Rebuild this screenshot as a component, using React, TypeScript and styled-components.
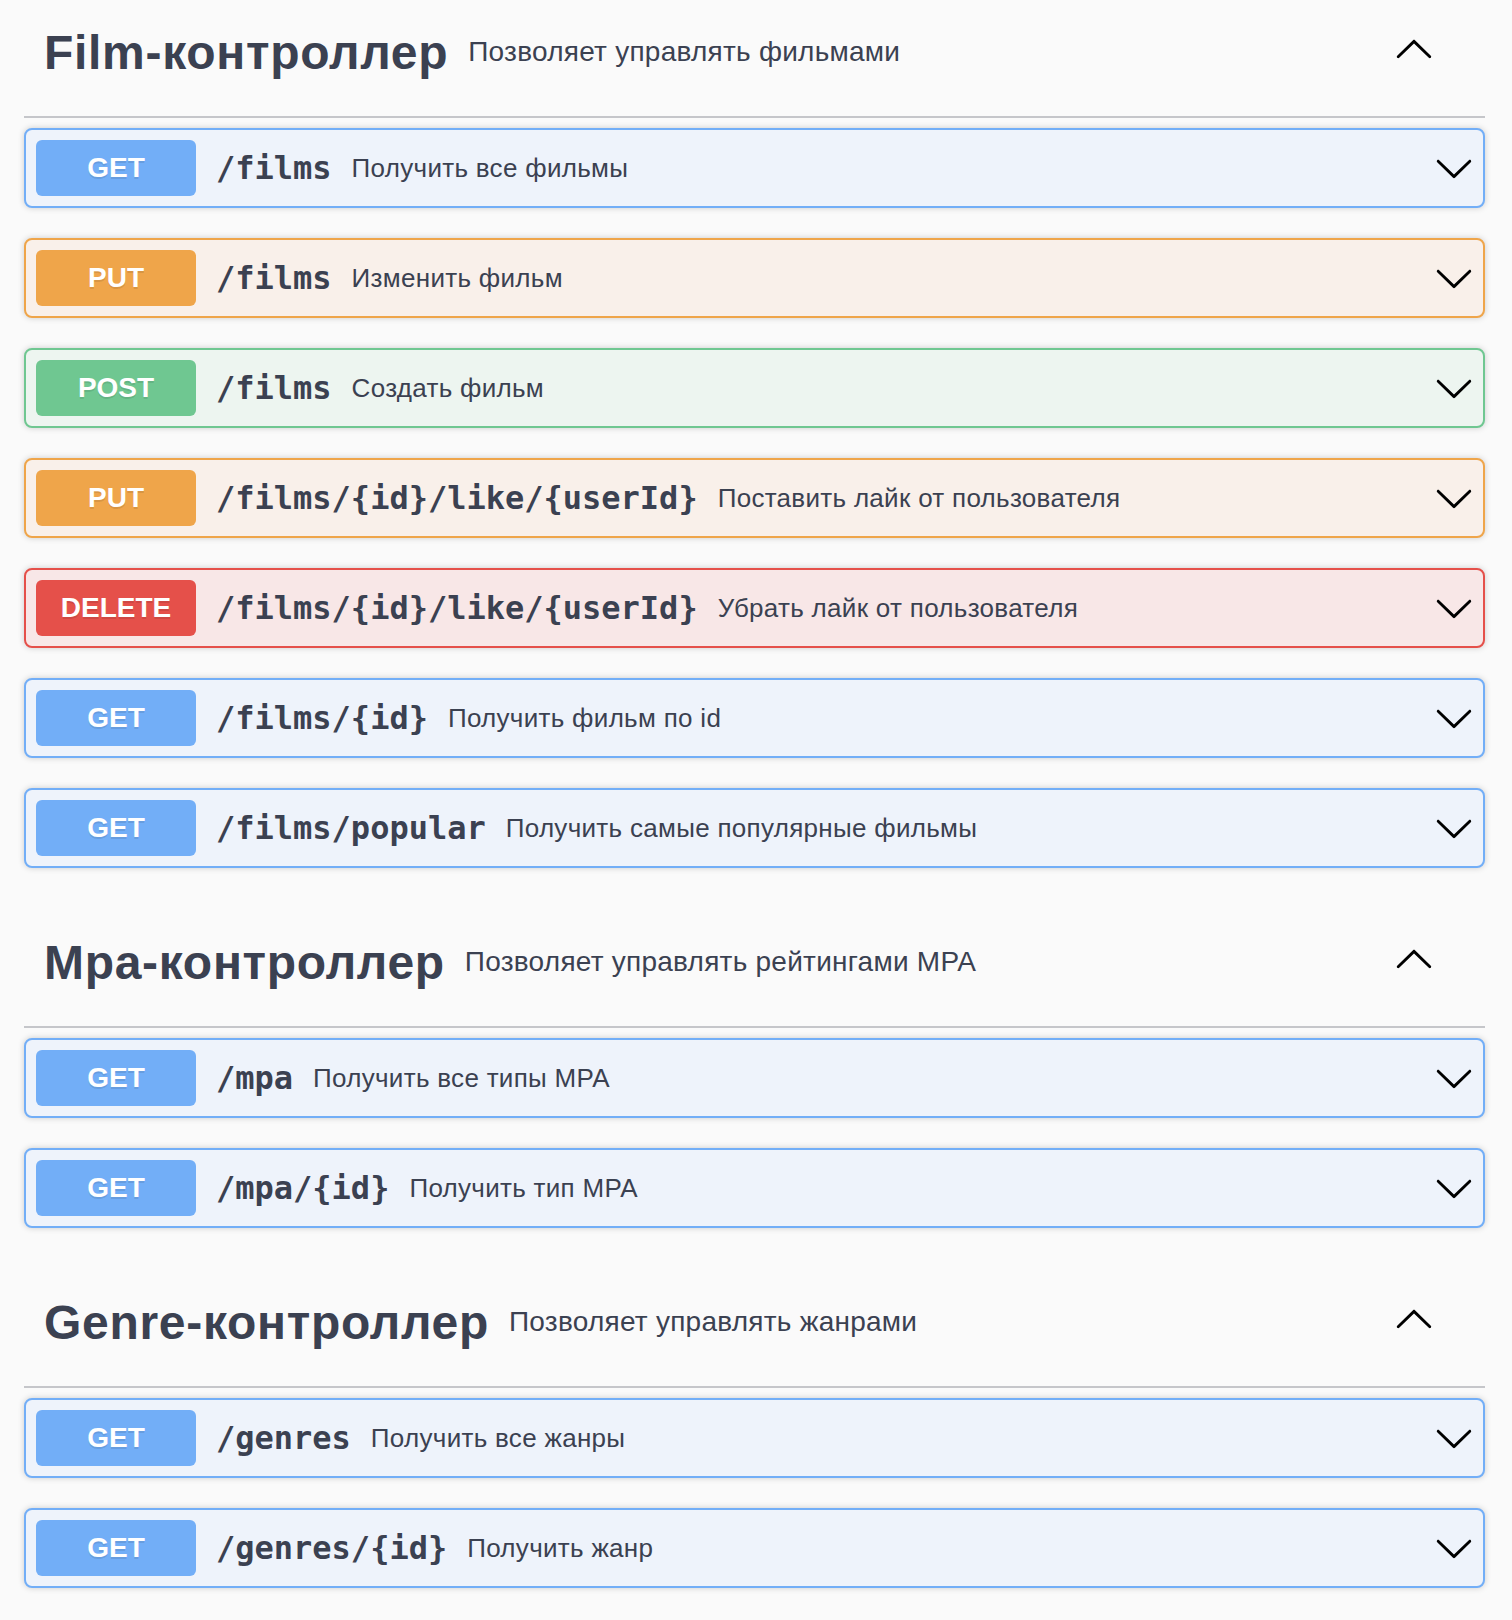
import React from "react";
import styled, { createGlobalStyle } from "styled-components";

type Method = "GET" | "PUT" | "POST" | "DELETE";

const palette: Record<Method, { main: string; bg: string }> = {
  GET: { main: "#72aef7", bg: "#eef3fb" },
  PUT: { main: "#efa54a", bg: "#f9f0ea" },
  POST: { main: "#6fc791", bg: "#edf5f0" },
  DELETE: { main: "#e5504a", bg: "#f8e7e7" },
};

const GlobalStyle = createGlobalStyle`
  html, body { margin: 0; padding: 0; background: #fafafa; }
  body { font-family: "Liberation Sans", Arial, sans-serif; color: #3b4151; overflow: hidden; }
`;

const Page = styled.div`
  margin-top: -12px;
  padding: 0 27px 0 24px;
  display: flex;
  flex-direction: column;
`;

const Section = styled.section`
  display: flex;
  flex-direction: column;
`;

const TagHeader = styled.div`
  box-sizing: border-box;
  height: 130px;
  display: flex;
  align-items: center;
  padding: 0 51px 0 20px;
  border-bottom: 2px solid #c5c6ca;
`;

const TagTitle = styled.h3`
  margin: 0;
  font-size: 48px;
  font-weight: 700;
  letter-spacing: 0.7px;
  color: #3b4151;
  white-space: nowrap;
`;

const TagDesc = styled.small`
  flex: 1;
  padding: 0 20px;
  font-size: 28px;
  letter-spacing: 0.25px;
  color: #3b4151;
`;

const Ops = styled.div`
  padding-top: 10px;
  display: flex;
  flex-direction: column;
`;

const OpBlock = styled.div<{ $method: Method }>`
  box-sizing: border-box;
  height: 80px;
  margin-bottom: 30px;
  display: flex;
  align-items: center;
  padding: 0 9px 0 10px;
  border: 2px solid ${(p) => palette[p.$method].main};
  border-radius: 8px;
  background: ${(p) => palette[p.$method].bg};
  box-shadow: 0 0 6px rgba(0, 0, 0, 0.19);
`;

const Badge = styled.span<{ $method: Method }>`
  flex: none;
  width: 160px;
  height: 56px;
  display: flex;
  align-items: center;
  justify-content: center;
  border-radius: 6px;
  background: ${(p) => palette[p.$method].main};
  color: #fff;
  font-size: 28px;
  font-weight: 700;
  text-shadow: 0 2px 0 rgba(0, 0, 0, 0.1);
`;

const Path = styled.span`
  padding: 0 20px;
  font-family: "DejaVu Sans Mono", monospace;
  font-weight: 700;
  font-size: 32px;
  color: #3b4151;
  white-space: nowrap;
`;

const OpDesc = styled.span`
  flex: 1;
  font-size: 26px;
  letter-spacing: 0.3px;
  color: #3b4151;
  white-space: nowrap;
`;

const Arrow = styled.svg<{ $up?: boolean }>`
  flex: none;
  width: 40px;
  height: 40px;
  transform: ${(p) => (p.$up ? "rotate(180deg)" : "none")};
  margin-bottom: ${(p) => (p.$up ? "4px" : "0")};
`;

const chevronPath =
  "M17.418 6.109c.272-.268.709-.268.979 0s.271.701 0 .969l-7.908 7.83c-.27.268-.707.268-.979 0l-7.908-7.83c-.27-.268-.27-.701 0-.969.271-.268.709-.268.979 0L10 13.25l7.418-7.141z";

const Chevron = ({ up }: { up?: boolean }) => (
  <Arrow $up={up} viewBox="0 0 20 20" aria-hidden="true">
    <path d={chevronPath} fill="#000" />
  </Arrow>
);

type Op = { method: Method; path: string; desc: string };
type Tag = { name: string; desc: string; ops: Op[] };

const tags: Tag[] = [
  {
    name: "Film-контроллер",
    desc: "Позволяет управлять фильмами",
    ops: [
      { method: "GET", path: "/films", desc: "Получить все фильмы" },
      { method: "PUT", path: "/films", desc: "Изменить фильм" },
      { method: "POST", path: "/films", desc: "Создать фильм" },
      { method: "PUT", path: "/films/{id}/like/{userId}", desc: "Поставить лайк от пользователя" },
      { method: "DELETE", path: "/films/{id}/like/{userId}", desc: "Убрать лайк от пользователя" },
      { method: "GET", path: "/films/{id}", desc: "Получить фильм по id" },
      { method: "GET", path: "/films/popular", desc: "Получить самые популярные фильмы" },
    ],
  },
  {
    name: "Mpa-контроллер",
    desc: "Позволяет управлять рейтингами MPA",
    ops: [
      { method: "GET", path: "/mpa", desc: "Получить все типы MPA" },
      { method: "GET", path: "/mpa/{id}", desc: "Получить тип MPA" },
    ],
  },
  {
    name: "Genre-контроллер",
    desc: "Позволяет управлять жанрами",
    ops: [
      { method: "GET", path: "/genres", desc: "Получить все жанры" },
      { method: "GET", path: "/genres/{id}", desc: "Получить жанр" },
    ],
  },
];

export default function App() {
  return (
    <>
      <GlobalStyle />
      <Page>
        {tags.map((t) => (
          <Section key={t.name}>
            <TagHeader>
              <TagTitle>{t.name}</TagTitle>
              <TagDesc>{t.desc}</TagDesc>
              <Chevron up />
            </TagHeader>
            <Ops>
              {t.ops.map((o, i) => (
                <OpBlock key={i} $method={o.method}>
                  <Badge $method={o.method}>{o.method}</Badge>
                  <Path>{o.path}</Path>
                  <OpDesc>{o.desc}</OpDesc>
                  <Chevron />
                </OpBlock>
              ))}
            </Ops>
          </Section>
        ))}
      </Page>
    </>
  );
}
